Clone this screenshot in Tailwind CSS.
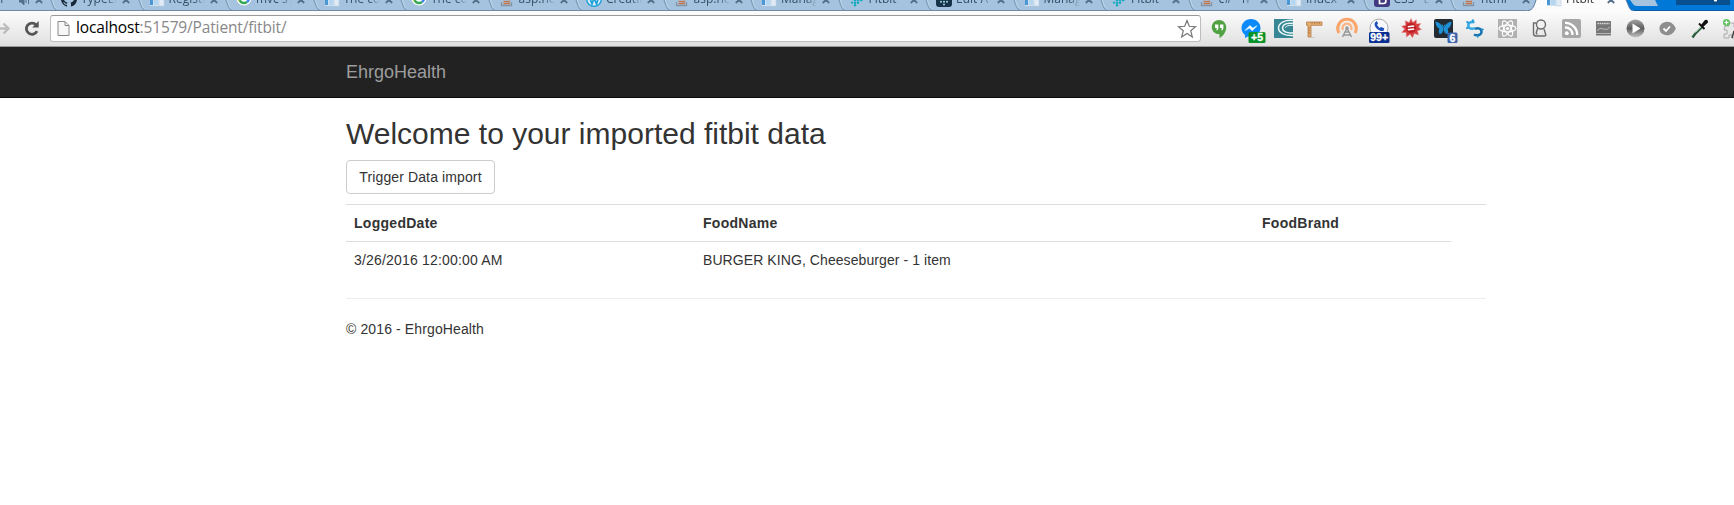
<!DOCTYPE html>
<html lang="en">
<head>
<meta charset="utf-8">
<title>Fitbit - EhrgoHealth</title>
<script src="https://cdn.jsdelivr.net/npm/@tailwindcss/browser@4"></script>
</head>
<body class="h-[505px] overflow-hidden bg-white font-['Liberation_Sans',Arial,sans-serif] text-[14px] leading-[20px] text-[#333]">

<svg class="hidden">
  <symbol id="doc" viewBox="0 0 16 16"><rect x="1" width="14" height="15" fill="#cfdfee"/><rect x="1" width="3" height="14" fill="#4a97d6"/><path d="M6 3h8M6 6h4" stroke="#fff" stroke-width="1.5"/><rect x="5" y="9" width="4" height="5" fill="#b4d6f0"/><rect x="10" y="8" width="5" height="7" fill="#e0ebf5" stroke="#b9cde0" stroke-width=".6"/></symbol>
  <symbol id="github" viewBox="0 0 16 16"><path fill="#16293b" d="M8 0C3.58 0 0 3.58 0 8c0 3.54 2.29 6.53 5.47 7.59.4.07.55-.17.55-.38v-1.49c-2.23.48-2.7-1.07-2.7-1.07-.36-.92-.89-1.17-.89-1.17-.73-.5.05-.49.05-.49.81.06 1.23.83 1.23.83.72 1.23 1.88.88 2.34.67.07-.52.28-.88.51-1.08-1.78-.2-3.64-.89-3.64-3.95 0-.88.31-1.59.82-2.15-.08-.2-.36-1.02.08-2.12 0 0 .67-.21 2.2.82a7.6 7.6 0 0 1 4 0c1.53-1.04 2.2-.82 2.2-.82.44 1.1.16 1.92.08 2.12.51.56.82 1.27.82 2.15 0 3.07-1.87 3.75-3.65 3.95.29.25.54.73.54 1.48v2.2c0 .21.15.46.55.38A8 8 0 0 0 16 8c0-4.42-3.58-8-8-8z"/></symbol>
  <symbol id="google" viewBox="0 0 16 16"><circle cx="8" cy="7" r="7.500" fill="#fff"/><path d="M3.5 4.500A5 5 0 0 1 12 3.500" fill="none" stroke="#ea4335" stroke-width="2.500"/><path d="M3.500 4.500a5 5 0 0 0 0 5" fill="none" stroke="#fbbc05" stroke-width="2.500"/><path d="M3.500 9.300A5 5 0 0 0 11 11" fill="none" stroke="#34a853" stroke-width="2.500"/><path d="M8 7h5a5 5 0 0 1-2 4" fill="none" stroke="#4285f4" stroke-width="2.500"/></symbol>
  <symbol id="so" viewBox="0 0 16 16"><path d="M2.500 11v3.500h10V11" fill="none" stroke="#8493a3" stroke-width="1.300"/><path d="M4.500 12.500h6.500M4.500 10.300l6.500.4M5 7.500l6.300 1.300M7 4l5 3" stroke="#c6754b" stroke-width="1.300"/></symbol>
  <symbol id="wp" viewBox="0 0 16 16"><circle cx="8" cy="8" r="7.300" fill="#d8effa" stroke="#21a0d8" stroke-width="1.400"/><path d="M3 5l3 8 2-6 2.500 6L13 5M2 5h4M7 5h4" fill="none" stroke="#21a0d8" stroke-width="1.700"/></symbol>
  <symbol id="fitbit" viewBox="0 0 16 16"><g fill="#12a8bd"><circle cx="6" cy="14.200" r="1.200"/><circle cx="6" cy="11.700" r="1.300"/><circle cx="6" cy="9" r="1.300"/><circle cx="3" cy="11.700" r="1.100"/><circle cx="9" cy="11.700" r="1.300"/><circle cx="9" cy="9" r="1.300"/><circle cx="12.200" cy="9" r="1.400"/></g></symbol>
  <symbol id="fitdark" viewBox="0 0 16 16"><rect width="16" height="16" rx="3" fill="#16334a"/><g fill="#9fd9e0"><circle cx="8" cy="13.500" r="1"/><circle cx="8" cy="10.800" r="1"/><circle cx="5" cy="10.800" r="1"/><circle cx="11" cy="10.800" r="1"/><circle cx="8" cy="8" r="1"/></g></symbol>
  <symbol id="boot" viewBox="0 0 16 16"><rect width="16" height="16" rx="3" fill="#423a80"/><path d="M5.500 3.500H9a2 2 0 0 1 0 4.200H5.500zM5.500 7.700h4a2.300 2.300 0 0 1 0 4.800h-4z" fill="none" stroke="#fff" stroke-width="1.700"/></symbol>
  <symbol id="close" viewBox="0 0 8 8"><path d="M.8.500L7.200 7M7.200.500L.8 7" stroke="#54718c" stroke-width="1.800"/></symbol>
</svg>

<!-- Tab strip -->
<div class="flex h-[11px] overflow-hidden bg-[#0078d7] font-['Open_Sans','Noto_Sans',sans-serif] text-[12px] leading-[16px] text-[#34506a]">
  <div id="tabs" class="flex h-[11px] w-[1541px] shrink-0 overflow-hidden border-b border-[#7189a6] bg-[#a5c3de]"></div>
  <div class="relative h-[11px] w-[193px] shrink-0">
    <svg class="absolute top-0 -left-[15px]" width="208" height="11" viewBox="0 0 208 11">
      <path d="M0 11C7 11 8 6 10 0h90c3 6 3 11 8 11z" fill="#fcfcfc"/>
      <path d="M2 10.500C7 10 8 6 10 0M100 0c3 6 3 10.500 8 10.500" fill="none" stroke="#5d7fa3"/>
      <path d="M108 10.500h100" stroke="#075aa5"/>
      <path d="M104 0h25l3 6h-20q-4 0-5-2z" fill="#a5c3de"/>
      <path d="M150 0h54v5h-54z" fill="#084f8f"/><path d="M188 .7h3" stroke="#fff" stroke-width="1.400"/>
    </svg>
    <svg class="absolute top-[-9px] left-[5px] size-4"><use href="#doc"/></svg>
    <span class="absolute top-[-9px] left-[25px] w-[36px] overflow-hidden whitespace-nowrap mask-r-from-70% text-[#333]">Fitbit -</span>
    <svg class="absolute top-[-4px] left-[66px] size-2"><use href="#close"/></svg>
  </div>
</div>

<!-- Toolbar -->
<div class="flex h-[36px] items-start overflow-hidden border-b border-[#999] bg-linear-to-b from-[#fcfcfc] to-[#e0e0e0]">
  <svg class="mt-[1px] h-8 w-[50px] shrink-0" viewBox="0 0 50 32" fill="none">
    <path d="M0 16.500h7M3.500 11.500l5 5-5 5" stroke="#bcbcbc" stroke-width="2.400"/>
    <path d="M37 19.200A5.600 5.600 0 1 1 36 12.800" stroke="#555" stroke-width="2.800"/><path d="M38.700 9v6.500h-6.500z" fill="#555"/>
  </svg>
  <div class="mt-[4px] flex h-[27px] w-[1151px] shrink-0 items-center rounded-[3px] border border-t-[#999] border-[#bdbdbd] bg-white">
    <svg class="ml-[6px] h-[17px] w-[13px]" viewBox="0 0 13 17"><path d="M1 1.500h7l4 4v10H1z" fill="#f7f7f7" stroke="#888"/><path d="M8 1.500v4h4" fill="none" stroke="#888"/></svg>
    <span class="mb-[2px] ml-[6px] font-['Open_Sans','Noto_Sans',sans-serif] text-[15.5px] leading-[23px] tracking-[-0.15px] whitespace-nowrap text-[#888]"><span class="text-black">localhost</span>:51579/Patient/fitbit/</span>
    <svg class="mr-[3px] ml-auto size-[20px]" viewBox="0 0 20 20"><path d="M10 1.500l2.300 5.800 6.200.4-4.800 4 1.600 6.200L10 14.400l-5.300 3.500 1.600-6.200-4.800-4 6.200-.4z" fill="#fff" stroke="#777" stroke-width="1.200"/></svg>
  </div>
  <div class="mt-[1px] ml-[2px] flex shrink-0 font-['Liberation_Sans',sans-serif] [&>svg]:size-8 [&>svg]:shrink-0">
    <svg viewBox="0 0 32 32"><path d="M16 8c-4 0-7.200 3.200-7.200 7.200s3.200 7 7.700 7V26c4-2 6.700-6.500 6.700-10.800C23.200 11.200 20 8 16 8z" fill="#4fa142"/><path d="M12 12.500h3.400v3.500q0 2-1.800 2.800v-2.800H12zM17 12.500h3.400v3.500q0 2-1.800 2.800v-2.800H17z" fill="#fff"/></svg>
    <svg viewBox="0 0 32 32"><path d="M16 7C10.500 7 6.500 11 6.500 16c0 3 1.500 5.400 3.500 7v3l3-1.600c6.500 1.500 12.500-2.500 12.500-8.400C25.500 11 21.500 7 16 7z" fill="#0b8bfb"/><path d="M10 18.500l5-5 2.700 2.700 4.300-2.400-4.800 5-2.700-2.700z" fill="#fff" stroke="#fff" stroke-width=".6"/><rect x="13.500" y="20" width="17" height="11" rx="1.500" fill="#079329"/><text x="22" y="29.200" text-anchor="middle" font-size="10.500" font-weight="bold" fill="#fff" stroke="#fff" stroke-width=".3">+5</text></svg>
    <svg viewBox="0 0 32 32"><rect x="7" y="7" width="19" height="19" fill="#378693"/><path d="M26 8.500c-7-1-14.500 2-14.500 7.500 0 5 7 8 14.500 7.500M26 11.500c-5-1-10.500.500-10.500 4.500 0 4 5.500 5.500 10.500 4.700" fill="none" stroke="#e8f6f7" stroke-width="1.500"/><path d="M26 13.500c-4-.5-7.500.5-7.500 2.500" fill="none" stroke="#e8f6f7"/></svg>
    <svg viewBox="0 0 32 32"><path d="M7.500 10h15.500v3.300H12V25H9V13.300H7.500z" fill="#e3ad72" stroke="#b57a45" stroke-width=".8"/><path d="M13 10.200v1.500M15.500 10.200v1.500M18 10.200v1.500M20.500 10.200v1.500M9.500 16H11M9.500 18.500H11M9.500 21H11" stroke="#9a6333" stroke-width=".8"/><path d="M12 25.500h4" stroke="#ccc"/></svg>
    <svg viewBox="0 0 32 32"><path d="M8 21a9.200 9.200 0 1 1 16 0" fill="none" stroke="#f9a66c" stroke-width="3.200"/><path d="M12 18a4.500 4.500 0 1 1 8 0" fill="none" stroke="#fcb688" stroke-width="2.400"/><path d="M16 16l-4.500 9M16 16l4.500 9M14 20h4M12.500 23h7" fill="none" stroke="#999" stroke-width="1.500"/><circle cx="16" cy="16" r="1.800" fill="#999"/></svg>
    <svg viewBox="0 0 32 32"><circle cx="16" cy="16" r="9" fill="#f7f9ff" stroke="#aaa"/><path d="M12 10.500c-2 4 4 9.500 8.500 8.500l.8-2.800-3.300-1.200-1.500 1-2.500-3 1-1.500-1.200-2.500z" fill="#1f4fbb"/><rect x="6" y="20" width="20.500" height="11" rx="1.500" fill="#0a2f91"/><text x="16.200" y="29.200" text-anchor="middle" font-size="10.500" font-weight="bold" fill="#fff" stroke="#fff" stroke-width=".3">99+</text></svg>
    <svg viewBox="0 0 32 32"><path d="M16 6.500l1.800 4 3.500-2.800.2 4.300 4.300-.6-2.300 3.700 3 2.300-4 1.300 1 4.200-4.200-1.300-1.700 4.200-2.600-3.500-3.600 2.700-.3-4.500-4.400-.1 3-3.400-3.200-2.800 4.200-1-.5-4.400 4 1.800z" fill="#d63a3c" stroke="#e39090" stroke-width=".5"/><circle cx="16" cy="16" r="5" fill="#bb2025"/><path d="M12.800 14.800l6.400-.8M12.800 17.800l6.400-.8" stroke="#fff" stroke-width="1.400"/></svg>
    <svg viewBox="0 0 32 32"><rect x="7" y="7" width="19" height="19" rx="2" fill="#232b31"/><path d="M16.500 17C15 12.500 12 10 8.500 9.500c0 3 1 6 4 7.500-1 1-1 3 0 5 2.500 0 3.500-2 4-5 .5 3 1.500 5 4 5 1-2 1-4 0-5 3-1.500 4-4.500 4-7.500C21 10 18 12.500 16.500 17z" fill="#1e90d6"/><path d="M15 12.500l1.500 3 1.500-3" fill="none" stroke="#1e90d6"/><rect x="20.500" y="20.500" width="10" height="10.500" rx="1.500" fill="#3c63ac"/><text x="25.500" y="29.500" text-anchor="middle" font-size="10.500" font-weight="bold" fill="#fff" stroke="#fff" stroke-width=".3">6</text></svg>
    <svg viewBox="0 0 32 32" fill="none"><path d="M15.500 10.500c-3-1.500-6.500.3-6.200 3.300s4 3.700 6.700 2.200" stroke="#36abe2" stroke-width="2.500"/><path d="M15 22.500c3.200 1.800 7.300.5 7.500-2.500s-3.500-4.800-6.500-3" stroke="#1675b0" stroke-width="2.500"/><path d="M13 9.500l1.500-2M9.500 11L7.500 9.500M9 15.500l-1.800 1M19 23.500l-.5 2M22.500 18l2-1" stroke="#1e94d2" stroke-width="1.700"/></svg>
    <svg viewBox="0 0 32 32"><rect x="7" y="7" width="19" height="19" fill="#b1b1b1"/><g fill="none" stroke="#fff" stroke-width="1.200"><ellipse cx="16.500" cy="16.500" rx="8.500" ry="3.300"/><ellipse cx="16.500" cy="16.500" rx="8.500" ry="3.300" transform="rotate(60 16.500 16.500)"/><ellipse cx="16.500" cy="16.500" rx="8.500" ry="3.300" transform="rotate(120 16.500 16.500)"/></g><circle cx="16.500" cy="16.500" r="1.600" fill="#fff"/></svg>
    <svg viewBox="0 0 32 32" fill="none" stroke="#6c6c6c" stroke-width="1.400"><circle cx="18" cy="12.500" r="4.500"/><path d="M13 11h-2.500v10.500q0 2.500 2.500 2.500h8.500q1.500 0 1.200-1.500L21 17M14.800 16l-1.500 4.500q-.3 1.500 1.200 1.500"/></svg>
    <svg viewBox="0 0 32 32"><rect x="7" y="7" width="19" height="19" rx="2" fill="#a7a7a7"/><circle cx="11.800" cy="21.200" r="1.900" fill="#fff"/><path d="M10 15.500a7 7 0 0 1 7.500 7.500M10 10.800A12 12 0 0 1 22.200 23" fill="none" stroke="#fff" stroke-width="2.300"/></svg>
    <svg viewBox="0 0 32 32"><rect x="9" y="9" width="15" height="14.500" fill="#777"/><path d="M10.500 11.500h12" stroke="#ddd" stroke-width="1.500" stroke-dasharray="1.500 .7"/><path d="M10 18.500q3-3.500 6.500-1.500t6.500-2" fill="none" stroke="#bbb"/><path d="M9 21.500h15" stroke="#b5b5b5"/></svg>
    <svg viewBox="0 0 32 32"><defs><linearGradient id="pg" x2="0" y2="1"><stop stop-color="#a5a5a5"/><stop offset=".5" stop-color="#5d5d5d"/><stop offset="1" stop-color="#c5c5c5"/></linearGradient></defs><circle cx="16.500" cy="16.500" r="9" fill="url(#pg)"/><path d="M13.500 11.500l8 5-8 5z" fill="#fff"/></svg>
    <svg viewBox="0 0 32 32"><path d="M15 10c4-1 8 2 9.800 6.500C23 21 19 24 15 23.200c-4-.5-6.500-3-6.500-6.600S11 10.500 15 10z" fill="#8e8e8e"/><path d="M12.500 16.500l2.500 2.500 4-4.500" fill="none" stroke="#fff" stroke-width="1.800"/></svg>
    <svg viewBox="0 0 32 32"><path d="M19 15l-7 7-2.500 3.500" fill="none" stroke="#2b5a3c" stroke-width="2.400"/><path d="M18.500 14.500l-6 6" stroke="#9bc6a9"/><path d="M16 11.500l5.500 5.500" stroke="#111" stroke-width="1.900"/><path d="M18 13l3.500-4.500q2-1.500 3.200.3t-.7 2.700L20 15z" fill="#111"/></svg>
    <svg viewBox="0 0 32 32"><path d="M10 14h4v-3h5v4h4v11h-6v-3h-3v3h-5v-4h3v-4h-3z" fill="#e8e8e8" stroke="#aaa"/><circle cx="11.500" cy="10.500" r="3.500" fill="#5ec25e"/><path d="M11.500 8.500v4M9.500 10.500h4" stroke="#fff" stroke-width="1.200"/><path d="M17 26l2-7" stroke="#444" stroke-width="1.500"/></svg>
  </div>
</div>

<!-- Site navigation -->
<nav class="h-[51px] border-b border-[#080808] bg-[#222]">
  <div class="ml-[346px] pt-[15px] text-[18px] text-[#9d9d9d]">EhrgoHealth</div>
</nav>

<main class="ml-[346px] w-[1140px]">
  <h2 class="pt-[19px] pb-[10px] text-[30px] leading-[33px]">Welcome to your imported fitbit data</h2>
  <button class="block h-[34px] w-[149px] rounded border border-[#ccc] bg-white text-[14px] tracking-[0.12px]">Trigger Data import</button>
  <div class="mt-[10px] border-t border-[#ddd]">
    <div class="grid h-[37px] w-[1105px] grid-cols-[349px_559px_1fr] border-b border-[#ddd] pt-[8px] font-bold tracking-[0.28px] [&>span]:pl-2">
      <span>LoggedDate</span><span>FoodName</span><span>FoodBrand</span>
    </div>
    <div class="grid h-[56px] w-[1105px] grid-cols-[349px_559px_1fr] pt-[8px] [&>span]:pl-2">
      <span class="tracking-[0.18px]">3/26/2016 12:00:00 AM</span><span class="tracking-[0.08px]">BURGER KING, Cheeseburger - 1 item</span><span></span>
    </div>
  </div>
  <footer class="border-t border-[#eee] pt-[20px] tracking-[0.12px]">© 2016 - EhrgoHealth</footer>
</main>

<script>
const tabs = [["", "er", 1], ["github", "TypeEr"], ["doc", "Registr"], ["google", "mvc s|"], ["doc", "The co"], ["google", "The co"], ["so", "asp.ne"], ["wp", "Creatin"], ["so", "asp.ne"], ["doc", "Manag"], ["fitbit", "Fitbit -"], ["fitdark", "Edit A"], ["doc", "Manag"], ["fitbit", "Fitbit -"], ["so", "c# - h"], ["doc", "Index"], ["boot", "CSS · E"], ["so", "html -"]];
document.getElementById("tabs").innerHTML = tabs.map(([icon, label, first]) => `
  <div class="relative h-[10px] w-[87.5px] shrink-0 ${first ? "-ml-[31.5px]" : ""}">
    ${first ? "" : `<svg class="absolute top-0 -left-[7px]" width="9" height="10"><path d="M2 0c2 5 2 9 6 10" fill="none" stroke="#7b98b5" stroke-width="1.200"/><path d="M3.300 0c2 5 2 8 5 9" fill="none" stroke="#c8dcee" stroke-width=".8"/></svg>`}
    ${icon ? `<svg class="absolute top-[-9px] left-[5px] size-4"><use href="#${icon}"/></svg>` : `<svg class="absolute top-[-4px] left-[50px]" width="12" height="10" viewBox="0 0 12 10"><path d="M0 3h2l3-3v9L2 6H0zM7 2v5M9.500 1v7" fill="#54718c" stroke="#54718c"/></svg>`}
    <span class="absolute top-[-9px] left-[25px] w-[36px] overflow-hidden whitespace-nowrap mask-r-from-70%">${label}</span>
    <svg class="absolute top-[-4px] left-[66px] size-2"><use href="#close"/></svg>
  </div>`).join("");
</script>
</body>
</html>
